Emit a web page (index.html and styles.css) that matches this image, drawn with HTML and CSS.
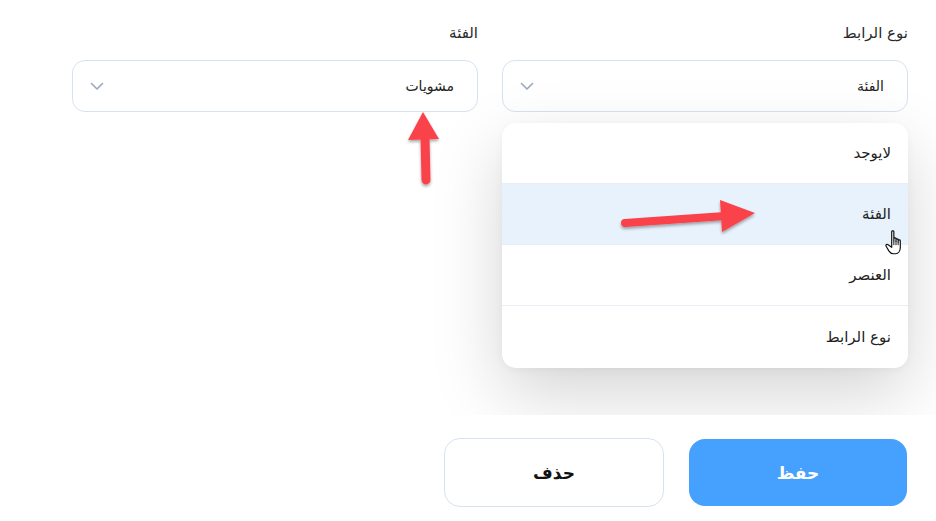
FILE: index.html
```html
<!DOCTYPE html>
<html lang="ar" dir="rtl">
<head>
<meta charset="utf-8">
<link rel="stylesheet" href="styles.css">
</head>
<body>
<div class="page">
  <section class="form">
    <div class="fields">
      <div class="field">
        <label class="label">نوع الرابط</label>
        <div class="select">
          <span class="value">الفئة</span>
          <svg class="chev" width="14" height="9" viewBox="0 0 14 9"><path d="M1.5 1.5 L7 7 L12.5 1.5" fill="none" stroke="#9aa6bf" stroke-width="1.6" stroke-linecap="round" stroke-linejoin="round"/></svg>
        </div>
        <ul class="menu">
          <li class="item">لايوجد</li>
          <li class="item active">الفئة</li>
          <li class="item">العنصر</li>
          <li class="item">نوع الرابط</li>
        </ul>
        <svg class="cursor" width="24" height="28" viewBox="0 0 22 26">
          <path d="M7 2.5 C7 1.4 9 1.4 9 2.5 L9 11 L9 9 C9 7.9 11 7.9 11 9 L11 11.5 L11 10 C11 8.9 13 8.9 13 10 L13 12 L13 11 C13 9.9 15 9.9 15 11 L15 17 C15 20 13.5 23 10.5 23 L8.5 23 C6.5 23 5.5 22 4.5 20.5 L1.8 16 C1.2 15 2.2 13.8 3.3 14.5 L7 17 Z" fill="#fff" stroke="#111" stroke-width="1.1" stroke-linejoin="round"/>
          <path d="M11 11.5 L11 15 M13 12 L13 15 M9 11 L9 15" stroke="#111" stroke-width="0.9"/>
        </svg>
        <svg class="arrow-right" width="150" height="50" viewBox="0 0 150 50">
          <defs><filter id="sh1" x="-20%" y="-40%" width="140%" height="180%"><feDropShadow dx="0" dy="2" stdDeviation="1.5" flood-color="#000" flood-opacity="0.35"/></filter></defs>
          <g filter="url(#sh1)">
            <path d="M10 33 L110 26" stroke="#f9424a" stroke-width="8" stroke-linecap="round"/>
            <path d="M105 10 L140 23 L107 42 Z" fill="#f9424a"/>
          </g>
        </svg>
      </div>
      <div class="field">
        <label class="label">الفئة</label>
        <div class="select">
          <span class="value">مشويات</span>
          <svg class="chev" width="14" height="9" viewBox="0 0 14 9"><path d="M1.5 1.5 L7 7 L12.5 1.5" fill="none" stroke="#9aa6bf" stroke-width="1.6" stroke-linecap="round" stroke-linejoin="round"/></svg>
        </div>
        <svg class="arrow-up" width="50" height="90" viewBox="0 0 50 90">
          <defs><filter id="sh2" x="-40%" y="-20%" width="180%" height="140%"><feDropShadow dx="0" dy="2" stdDeviation="1.5" flood-color="#000" flood-opacity="0.35"/></filter></defs>
          <g filter="url(#sh2)">
            <path d="M23 28 L24 70" stroke="#f9424a" stroke-width="9" stroke-linecap="round"/>
            <path d="M21 2 L6 30 L37 29 Z" fill="#f9424a"/>
          </g>
        </svg>
      </div>
    </div>
  </section>
  <div class="actions">
    <button class="btn primary">حفظ</button>
    <button class="btn secondary">حذف</button>
  </div>
</div>
</body>
</html>
```
FILE: styles.css
```css
* { box-sizing: border-box; }
html, body { margin: 0; padding: 0; background: #fff; }
body {
  font-family: "DejaVu Sans", "Liberation Sans", sans-serif;
  color: #222;
  width: 936px;
  height: 521px;
  overflow: hidden;
}
.page { width: 936px; }
.form {
  height: 415px;
  overflow: hidden;
  padding: 22px 28px 0 72px;
}
.fields {
  display: grid;
  grid-template-columns: 406px 406px;
  column-gap: 24px;
}
.field { position: relative; }
.label {
  display: block;
  font-size: 15px;
  line-height: 22px;
  color: #2a2a2a;
  height: 38px;
}
.select {
  height: 52px;
  border: 1px solid #d8e2ef;
  border-radius: 13px;
  background: #fff;
  display: flex;
  align-items: center;
  justify-content: space-between;
  padding: 0 23px 0 17px;
}
.value { font-size: 14px; color: #222; }
.chev { display: block; }
.menu {
  position: absolute;
  top: 101px;
  right: 0;
  width: 406px;
  margin: 0;
  padding: 0;
  list-style: none;
  background: #fff;
  border-radius: 14px;
  overflow: hidden;
  box-shadow: 0 26px 70px rgba(0,0,0,0.17), 0 2px 8px rgba(0,0,0,0.04);
  z-index: 2;
}
.item {
  height: 61px;
  display: flex;
  align-items: center;
  padding: 0 17px;
  font-size: 15px;
  color: #222;
  border-bottom: 1px solid #e8eef6;
}
.item:last-child { border-bottom: none; height: 62px; }
.item.active { background: #e8f2fc; }
.cursor {
  position: absolute;
  top: 207px;
  right: 0;
  z-index: 5;
}
.arrow-right {
  position: absolute;
  top: 168px;
  right: 143px;
  z-index: 5;
}
.arrow-up {
  position: absolute;
  top: 88px;
  right: 26px;
  z-index: 5;
}
.actions {
  display: flex;
  flex-direction: row;
  gap: 25px;
  padding: 23px 29px 0 0;
  align-items: center;
}
.btn {
  font-family: "DejaVu Sans", "Liberation Sans", sans-serif;
  font-weight: bold;
  font-size: 17px;
  border-radius: 16px;
  cursor: pointer;
}
.btn.primary {
  width: 218px;
  height: 67px;
  background: #45a0fe;
  color: #fff;
  border: none;
}
.btn.secondary {
  width: 220px;
  height: 69px;
  background: #fff;
  color: #111;
  border: 1px solid #d8e2ef;
}
```
